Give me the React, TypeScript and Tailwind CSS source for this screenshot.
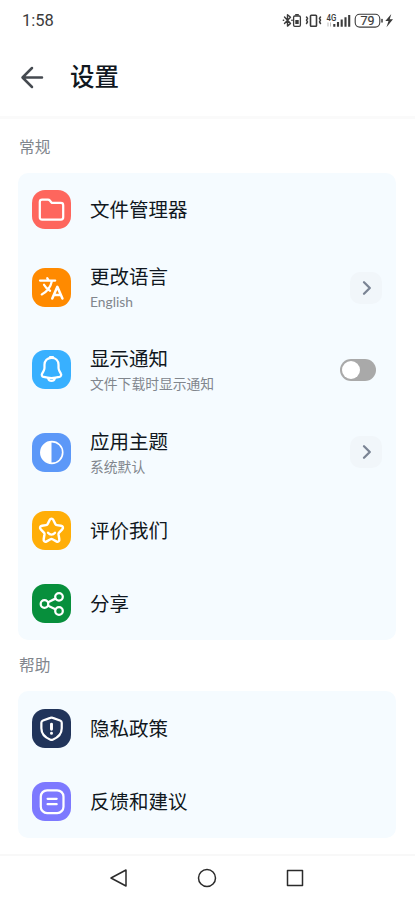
import type { ReactNode } from "react";

type Item = {
  title: string;
  subtitle?: string;
  color: string;
  icon: ReactNode;
  control?: "chevron" | "switch";
};

const stroke = {
  fill: "none",
  stroke: "currentColor",
  strokeWidth: 2.3,
  strokeLinecap: "round" as const,
  strokeLinejoin: "round" as const,
};

const general: Item[] = [
  {
    title: "文件管理器",
    color: "bg-[#fe665d]",
    icon: (
      <path
        {...stroke}
        d="M8 12.3c0-1.6.8-2.4 2.4-2.4h6c.8 0 1.4.3 1.9.9l1.4 1.7c.4.5.9.8 1.6.8h8.3c1.6 0 2.4.8 2.4 2.4v12.3c0 1.6-.8 2.4-2.4 2.4H10.4c-1.6 0-2.4-.8-2.4-2.4z"
      />
    ),
  },
  {
    title: "更改语言",
    subtitle: "English",
    color: "bg-[#ff8a00]",
    icon: (
      <>
        <path {...stroke} d="M8.2 12.9h15.6M15.6 10.4l1.5 2.3M20.5 13.1C19.2 19.3 15.5 24.3 10 27.1M12.3 17.2c1.4 2.6 3.500 4.700 6.200 6.200" />
        <path {...stroke} strokeWidth={2.6} d="M20.8 31.3L26 19.3l5.2 12M22.5 27.800h7" />
      </>
    ),
    control: "chevron",
  },
  {
    title: "显示通知",
    subtitle: "文件下载时显示通知",
    color: "bg-[#38b0ff]",
    icon: (
      <>
        <path
          {...stroke}
          d="M20 8c-4.300 0-7.200 3-7.200 7.200v3.300c0 1.200-.5 2.300-1.100 3.400l-1.300 2.300c-.9 1.600-.1 3 1.500 3.400 5.300 1.500 10.900 1.500 16.200 0 1.600-.5 2.400-1.900 1.500-3.400l-1.300-2.300c-.6-1.100-1.100-2.200-1.100-3.400v-3.300C27.200 11 24.300 8 20 8z"
        />
        <path {...stroke} d="M16.6 29.200c.5 1.700 1.800 2.500 3.400 2.500s2.900-.8 3.400-2.500M18.500 7.200h3" />
      </>
    ),
    control: "switch",
  },
  {
    title: "应用主题",
    subtitle: "系统默认",
    color: "bg-[#5c98f8]",
    icon: (
      <>
        <circle {...stroke} cx="20.3" cy="20" r="11.2" strokeWidth={1.7} />
        <path fill="currentColor" d="M20 9a11 11 0 0 0 0 22z" />
      </>
    ),
    control: "chevron",
  },
  {
    title: "评价我们",
    color: "bg-[#ffae08]",
    icon: (
      <>
        <path
          {...stroke}
          strokeWidth={2.5}
          d="M18.1 9.200c.9-1.800 2.900-1.800 3.800 0l2 4.200c.3.600.9 1 1.600 1.100l4.300.7c2 .3 2.600 2.200 1.200 3.700l-3.200 3.300c-.5.5-.7 1.200-.6 1.900l.8 4.700c.4 2.200-1.200 3.300-3.100 2.300l-3.900-2.100c-.6-.3-1.400-.3-2 0l-3.900 2.100c-1.900 1-3.500-.1-3.100-2.300l.8-4.700c.1-.7-.1-1.400-.6-1.900L9 18.900c-1.400-1.500-.8-3.400 1.200-3.700l4.300-.7c.7-.1 1.300-.5 1.600-1.100z"
        />
        <path {...stroke} d="M16.4 22.300c2 2.600 5.200 2.600 7.200 0" />
      </>
    ),
  },
  {
    title: "分享",
    color: "bg-[#078f3c]",
    icon: (
      <>
        <circle {...stroke} cx="12.8" cy="20.5" r="3.9" />
        <circle {...stroke} cx="27.7" cy="13.2" r="3.9" />
        <circle {...stroke} cx="27.7" cy="27.7" r="3.9" />
        <path {...stroke} d="M16.5 18.700l7.500-3.700M16.500 22.300l7.500 3.600" />
      </>
    ),
  },
];

const help: Item[] = [
  {
    title: "隐私政策",
    color: "bg-[#21345a]",
    icon: (
      <>
        <path
          {...stroke}
          d="M18.8 9.100c.9-.4 1.600-.4 2.500 0l7.500 2.700c1.100.4 1.700 1.100 1.700 2.300v5.600c0 5.700-4.200 9.700-9.300 11.800-.8.300-1.500.3-2.300 0-5.100-2.100-9.300-6.100-9.300-11.800v-5.600c0-1.200.6-1.900 1.700-2.300z"
        />
        <path {...stroke} strokeWidth={3} d="M20 15.500v5.300M20 24.900v.1" />
      </>
    ),
  },
  {
    title: "反馈和建议",
    color: "bg-[#7d79ff]",
    icon: (
      <>
        <rect {...stroke} x="9" y="8.5" width="23.3" height="23.3" rx="6.500" />
        <path {...stroke} d="M16 17.300h9.300M16 22.700h9.300" />
      </>
    ),
  },
];

function StatusBar() {
  return (
    <div className="flex h-10 items-center justify-between pr-[21px] pl-[22px] text-[#3b3b3b]">
      <span className="pt-[3px] font-[Roboto] text-[16.5px] leading-none">1:58</span>
      <svg className="h-5 w-[112px]" viewBox="0 0 112 20">
        {/* bluetooth */}
        <path {...stroke} strokeWidth={1.4} d="M2.5 7l6 6.500-3 2.600V4.700l3 2.600-6 6.200M1.300 10.200h.4M9.800 10.200h.4" />
        {/* battery saver */}
        <path fill="currentColor" d="M13.200 4h3.600v1.500h-3.600zM13.300 10h3.400v4h-3.400z" />
        <rect {...stroke} strokeWidth={1.3} x="11.600" y="6" width="6.800" height="10.300" rx="1.200" />
        {/* vibrate */}
        <rect {...stroke} strokeWidth={1.6} x="28.5" y="5.200" width="6" height="11" rx=".8" />
        <path {...stroke} strokeWidth={1.5} d="M24.500 7l1 1.500-1 1.700 1 1.600-1 1.700M38.500 7l-1 1.500 1 1.700-1 1.600 1 1.700" />
        <text x="44.5" y="10.500" fontSize="8.500" fontWeight="500" fontFamily="Roboto" textLength="9.800" lengthAdjust="spacingAndGlyphs" fill="currentColor">4G</text>
        <path stroke="#bbb" strokeWidth="1" fill="none" d="M46 12.500v4M48.500 12.500v4" />
        <path stroke="currentColor" strokeWidth="2.1" d="M52.300 14v2.700M56 12v4.700M59.700 9.500v7.200M63.500 7.200v9.500M67.200 5v11.700" />
        {/* battery level */}
        <rect {...stroke} strokeWidth={1.1} x="73.2" y="4.300" width="24.600" height="12.800" rx="4.500" />
        <path stroke="currentColor" strokeWidth="1.5" strokeLinecap="round" d="M100 9.500v2.500" />
        <text x="85.5" y="15.200" textAnchor="middle" fontSize="12.500" fontFamily="Roboto" fill="currentColor" stroke="currentColor" strokeWidth=".2">79</text>
        <path fill="currentColor" d="M109.300 4l-6 7h3.200l-2 6.200 6.500-8h-3.300z" />
      </svg>
    </div>
  );
}

function Control({ type }: { type: "chevron" | "switch" }) {
  if (type === "switch") {
    return (
      <div className="mr-1.5 flex h-[22px] w-9 items-center rounded-full bg-[#a9a9a9] px-0.5">
        <div className="size-[18px] rounded-full bg-white" />
      </div>
    );
  }

  return (
    <div className="flex size-8 items-center justify-center rounded-[10px] bg-[#f1f6fa]">
      <svg className="size-4 text-[#7a8494]" viewBox="0 0 16 16">
        <path {...stroke} d="M6 2.300l5.800 5.700L6 13.700" />
      </svg>
    </div>
  );
}

function Row({ item }: { item: Item }) {
  return (
    <div className={`flex items-center px-3.5 ${item.subtitle ? "h-[82.3px]" : "h-[73.5px]"}`}>
      <div className={`size-[39px] shrink-0 rounded-[13px] text-white ${item.color}`}>
        <svg className="size-full" viewBox="0 0 40 40">
          {item.icon}
        </svg>
      </div>
      <div className="ml-[19px] flex-1 pt-px">
        <p className="text-[19.5px] leading-[26px] text-[#101720]">{item.title}</p>
        {item.subtitle && <p className="mt-0.5 text-[13.8px] leading-5 text-[#81868d]">{item.subtitle}</p>}
      </div>
      {item.control && <Control type={item.control} />}
    </div>
  );
}

function Section({ title, items }: { title: string; items: Item[] }) {
  return (
    <section>
      <h2 className="flex h-[51px] items-center pl-px text-[15.7px] text-[#81868d]">{title}</h2>
      <div className="rounded-[10px] bg-[#f5fbff]">
        {items.map((item) => (
          <Row key={item.title} item={item} />
        ))}
      </div>
    </section>
  );
}

export default function App() {
  return (
    <div className="flex h-[900px] w-full flex-col overflow-hidden bg-white font-['Lato','Noto_Sans_CJK_SC',sans-serif]">
      <StatusBar />
      <header className="flex h-[79px] items-center border-b-[3px] border-[#fafafa] pb-[2px] pl-5">
        <svg className="size-6 text-[#454a50]" viewBox="0 0 24 24">
          <path {...stroke} strokeWidth={2.5} d="M22 12.500H2.800M12 3L2.500 12.500 12 22" />
        </svg>
        <h1 className="ml-[26px] text-[24.5px] font-medium text-[#101720]">设置</h1>
      </header>
      <main className="flex-1 pt-[3px] pr-[19px] pl-[18px]">
        <Section title="常规" items={general} />
        <Section title="帮助" items={help} />
      </main>
      <nav className="flex h-[46px] items-center justify-between border-t-2 border-[#f8f8f8] pr-[110px] pl-[108px] text-[#2b2b2b]">
        <svg className="size-5" viewBox="0 0 20 20">
          <path {...stroke} strokeWidth={1.5} d="M18 2v16L3 10z" />
        </svg>
        <svg className="size-5" viewBox="0 0 20 20">
          <circle {...stroke} strokeWidth={1.5} cx="10" cy="10" r="8.5" />
        </svg>
        <svg className="size-5" viewBox="0 0 20 20">
          <rect {...stroke} strokeWidth={1.5} x="2.5" y="2.5" width="15" height="15" />
        </svg>
      </nav>
    </div>
  );
}
